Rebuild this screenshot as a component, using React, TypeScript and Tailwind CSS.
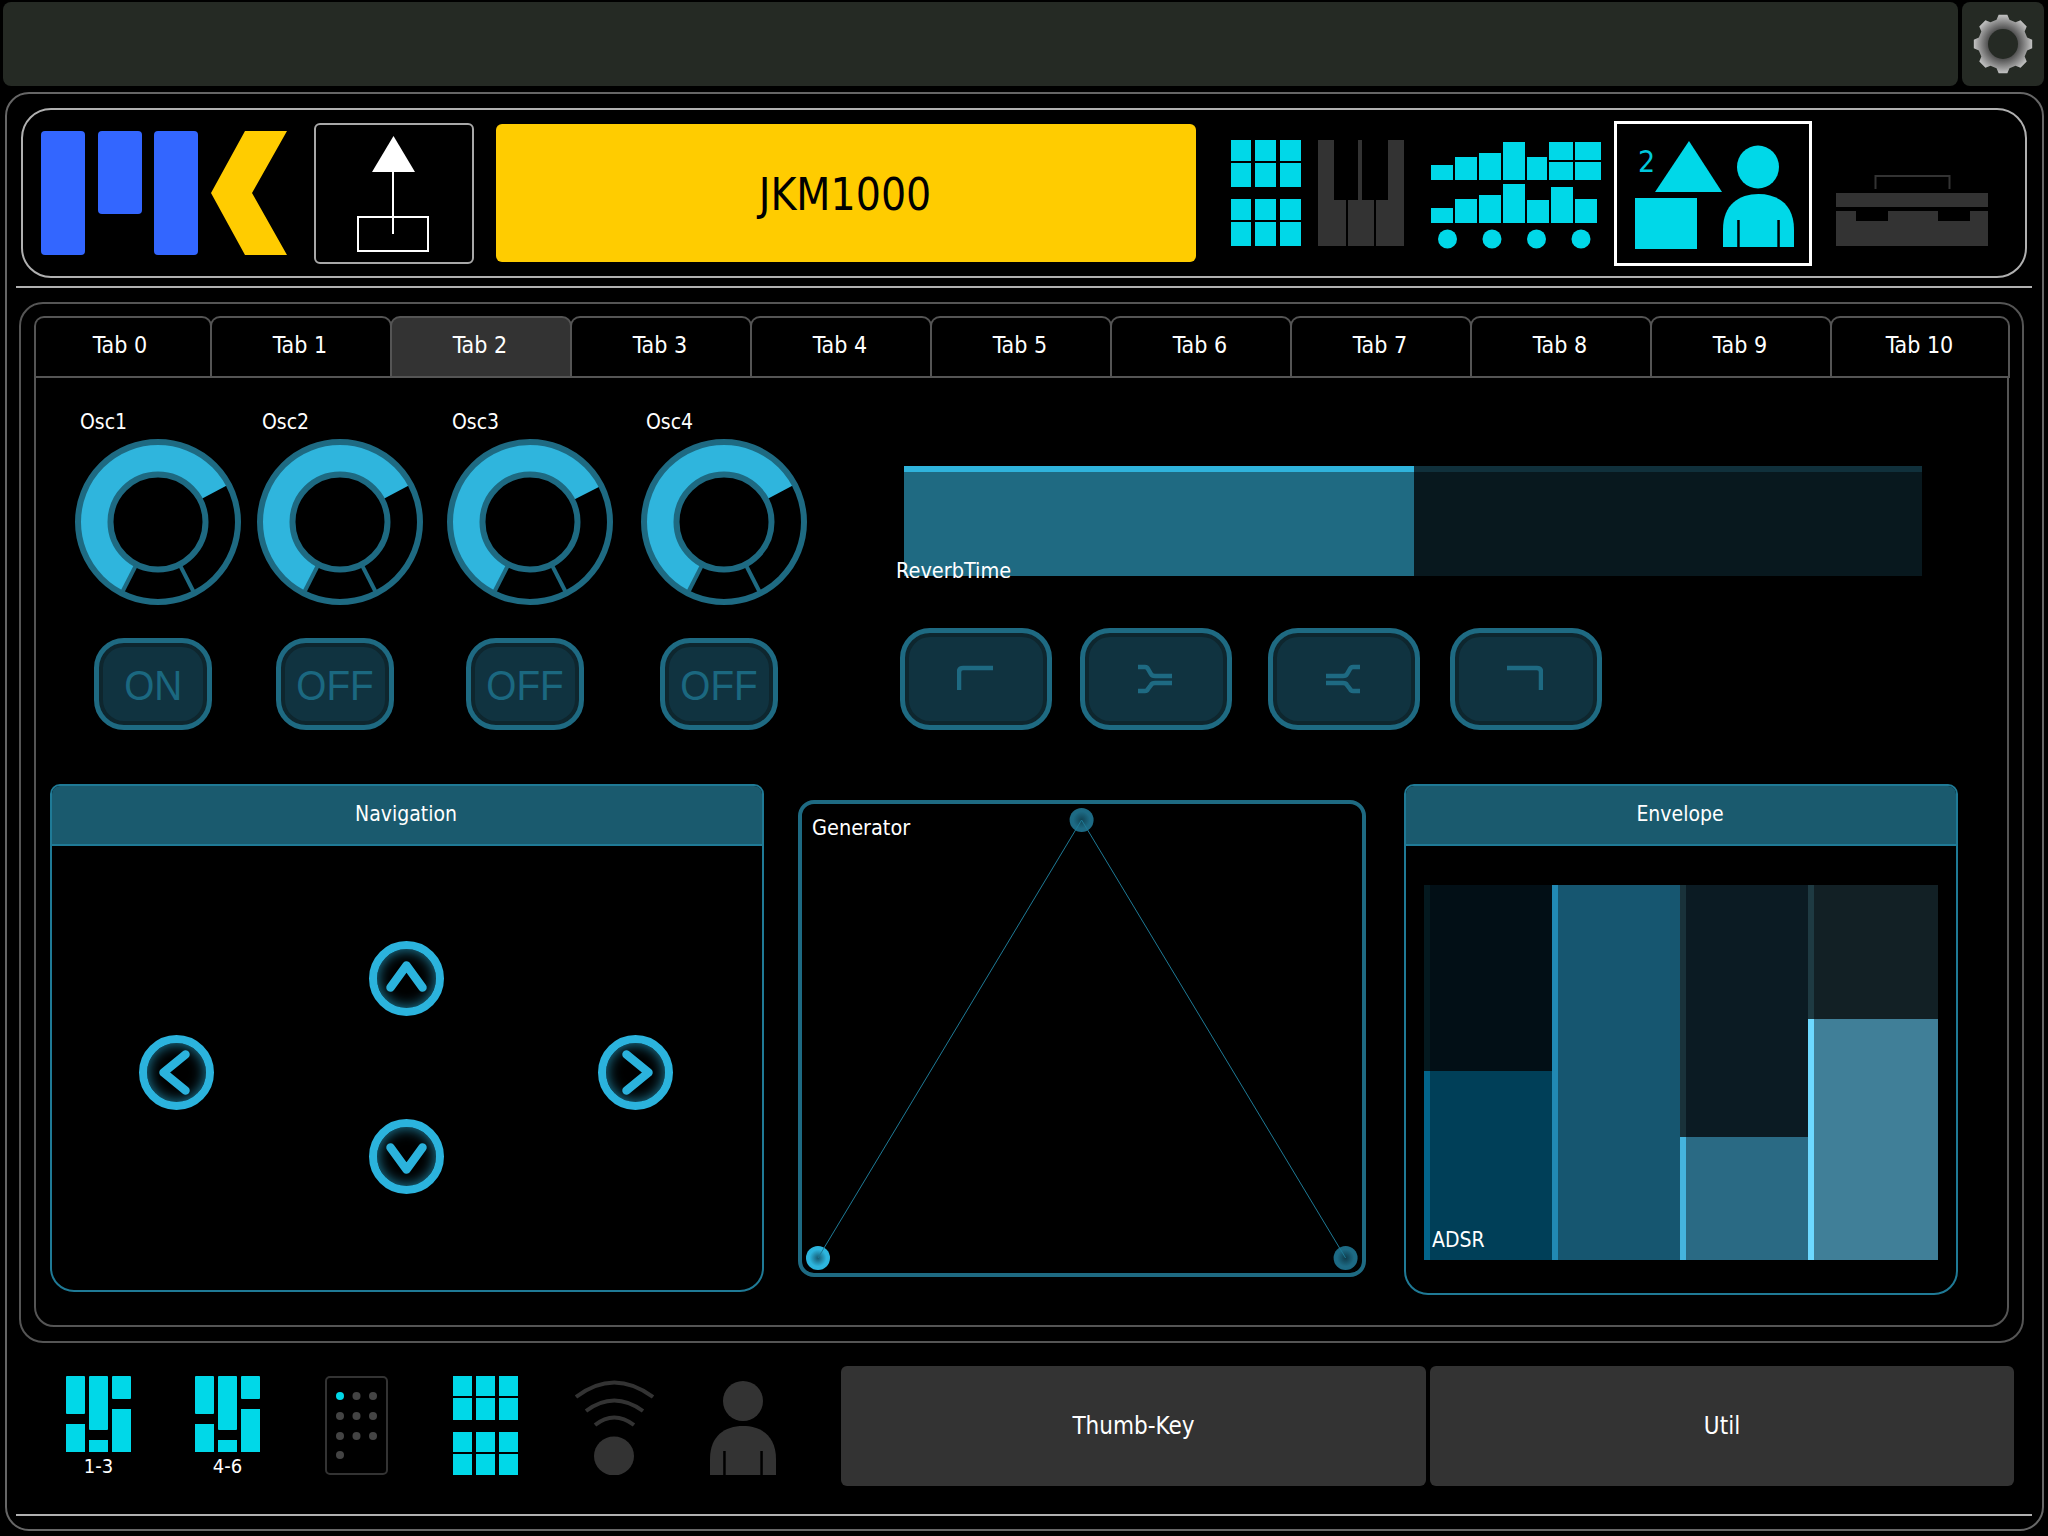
import React from "react";

const CY = "#00d8e8";
const DK = "#333333";

function polar(r: number, deg: number, c: number) {
  const a = ((deg - 90) * Math.PI) / 180;
  return [c + r * Math.cos(a), c + r * Math.sin(a)];
}
function sector(ro: number, ri: number, a0: number, a1: number, c: number) {
  const sweep = ((a1 - a0) % 360 + 360) % 360;
  const large = sweep > 180 ? 1 : 0;
  const [x0, y0] = polar(ro, a0, c);
  const [x1, y1] = polar(ro, a1, c);
  const [x2, y2] = polar(ri, a1, c);
  const [x3, y3] = polar(ri, a0, c);
  return `M${x0} ${y0}A${ro} ${ro} 0 ${large} 1 ${x1} ${y1}L${x2} ${y2}A${ri} ${ri} 0 ${large} 0 ${x3} ${y3}Z`;
}

function Knob({ end = 62 }: { end?: number }) {
  const c = 83;
  const spoke = (deg: number) => {
    const [x0, y0] = polar(47.5, deg, c);
    const [x1, y1] = polar(80, deg, c);
    return `M${x0} ${y0}L${x1} ${y1}`;
  };
  return (
    <svg width="166" height="166" viewBox="0 0 166 166" className="block">
      <path d={sector(80, 47.5, 207, end, c)} fill="#2fb5dd" />
      <circle cx={c} cy={c} r="80" fill="none" stroke="#1e6a82" strokeWidth="6" />
      <circle cx={c} cy={c} r="47.5" fill="none" stroke="#1e6a82" strokeWidth="6" />
      <path d={spoke(207)} stroke="#1e6a82" strokeWidth="4" />
      <path d={spoke(153)} stroke="#1e6a82" strokeWidth="4" />
    </svg>
  );
}

function Osc({ label, btn, ml, end }: { label: string; btn: string; ml: string; end?: number }) {
  return (
    <div className={`flex flex-col w-[165px] shrink-0 pt-[30px] ${ml}`}>
      <div className="h-[28px] pl-[5px] text-[21px] leading-[28px] text-white">{label}</div>
      <div className="mt-[3px] h-[165px]">
        <Knob end={end} />
      </div>
      <div className="mt-[34px] ml-[19px] w-[118px] h-[92px] rounded-[30px] border-[5px] border-[#1e6a82] bg-[#103340] shadow-[inset_0_0_0_4px_#0e262e] flex items-center justify-center pt-[3px]">
        <span className="block scale-x-[0.9] text-[43px] leading-none text-[#1b6880] font-['Liberation_Sans',sans-serif]">
          {btn}
        </span>
      </div>
    </div>
  );
}

function CurveBtn({ ml, children }: { ml: string; children: React.ReactNode }) {
  return (
    <div
      className={`${ml} w-[152px] h-[102px] rounded-[30px] border-[5px] border-[#1e6a82] bg-[#103340] shadow-[inset_0_0_0_4px_#0e262e] flex items-center justify-center pr-[2px]`}
    >
      <svg width="36" height="32" viewBox="0 0 36 32" fill="none" stroke="#1e6a82" strokeWidth="4.500" className="block">
        {children}
      </svg>
    </div>
  );
}

function Chev({ dir }: { dir: "u" | "d" | "l" | "r" }) {
  const d = {
    u: "M-16 9L0 -13L16 9",
    d: "M-16 -9L0 13L16 -9",
    l: "M9 -18L-13 0L9 18",
    r: "M-9 -18L13 0L-9 18",
  }[dir];
  return (
    <div className="w-[75px] h-[75px] rounded-full border-[8px] border-[#2bb3dd] bg-black shadow-[inset_0_0_14px_rgba(43,179,221,0.75)] flex items-center justify-center">
      <svg width="59" height="59" viewBox="-29.500 -29.500 59 59" className="block">
        <path d={d} fill="none" stroke="#2bb3dd" strokeWidth="8.500" strokeLinecap="round" strokeLinejoin="round" />
      </svg>
    </div>
  );
}

function PanelHead({ title }: { title: string }) {
  return (
    <div className="h-[60px] shrink-0 bg-[#1a5a6e] border-b-2 border-[#1f7a96] rounded-t-[8px] flex items-center justify-center pb-[1px] pr-[2px] text-[21px] text-white">
      {title}
    </div>
  );
}

function EnvCol({
  w,
  topH,
  topBg,
  topStrip,
  botBg,
  botStrip,
  label,
}: {
  w: string;
  topH: string;
  topBg: string;
  topStrip: string;
  botBg: string;
  botStrip: string;
  label?: string;
}) {
  return (
    <div className={`${w} flex flex-col`}>
      <div className={`${topH} ${topBg} shrink-0`}>
        <div className={`w-[6px] h-full ${topStrip}`} />
      </div>
      <div className={`flex-1 ${botBg} flex items-end`}>
        <div className={`w-[6px] h-full shrink-0 ${botStrip}`} />
        {label ? <span className="pl-[2px] pb-[7px] text-[21px] leading-[26px] text-white">{label}</span> : null}
      </div>
    </div>
  );
}

function Gear() {
  const pts: string[] = [];
  const c = 30;
  for (let i = 0; i < 8; i++) {
    const a = i * 45;
    for (const [r, o] of [
      [25, -15],
      [29.5, -8.5],
      [29.5, 8.5],
      [25, 15],
    ] as [number, number][]) {
      const [x, y] = polar(r, a + o, c);
      pts.push(`${x},${y}`);
    }
  }
  return (
    <svg width="60" height="60" viewBox="0 0 60 60" className="block">
      <defs>
        <radialGradient id="gearGrad" cx="50%" cy="50%" r="50%">
          <stop offset="50%" stopColor="#4e4e4e" />
          <stop offset="100%" stopColor="#c2c2c2" />
        </radialGradient>
      </defs>
      <polygon points={pts.join(" ")} fill="url(#gearGrad)" />
      <circle cx={c} cy={c} r="15" fill="#252a24" />
    </svg>
  );
}

function Logo() {
  return (
    <svg width="246" height="124" viewBox="41 131 246 124" className="block shrink-0">
      <rect x="41" y="131" width="44" height="124" rx="4" fill="#3366ff" />
      <rect x="98" y="131" width="44" height="83" rx="4" fill="#3366ff" />
      <rect x="154" y="131" width="44" height="124" rx="4" fill="#3366ff" />
      <polygon points="245,131 287,131 252,193 287,255 245,255 211,193" fill="#ffcc00" />
    </svg>
  );
}

function GridIcon() {
  const xs = [
    [1231, 20],
    [1255, 21],
    [1280, 21],
  ];
  const ys = [
    [140, 21],
    [163, 24],
    [199, 21],
    [222, 24],
  ];
  return (
    <svg width="70" height="106" viewBox="1231 140 70 106" className="block shrink-0" fill={CY}>
      {ys.map(([y, h]) => xs.map(([x, w]) => <rect key={`${x}-${y}`} x={x} y={y} width={w} height={h} />))}
    </svg>
  );
}

function Piano() {
  return (
    <svg width="86" height="106" viewBox="1318 140 86 106" className="block shrink-0" fill={DK}>
      <path d="M1318 140H1334V200H1346V246H1318Z" />
      <path d="M1358 140H1362V200H1374V246H1348V200H1358Z" />
      <path d="M1388 140H1404V246H1376V200H1388Z" />
    </svg>
  );
}

function Bars() {
  const top = [
    [1431, 22, 165],
    [1455, 22, 157],
    [1479, 22, 153],
    [1503, 22, 142],
    [1527, 20, 157],
  ];
  const bot = [
    [1431, 22, 208],
    [1455, 22, 199],
    [1479, 22, 195],
    [1503, 22, 184],
    [1527, 22, 200],
    [1551, 22, 187],
    [1575, 22, 199],
  ];
  return (
    <svg width="170" height="110" viewBox="1431 140 170 110" className="block shrink-0 mt-[4px]" fill={CY}>
      {top.map(([x, w, y]) => (
        <rect key={x} x={x} y={y} width={w} height={180 - y} />
      ))}
      <rect x="1549" y="142" width="24" height="18" />
      <rect x="1549" y="162" width="24" height="18" />
      <rect x="1575" y="142" width="26" height="18" />
      <rect x="1575" y="162" width="26" height="18" />
      {bot.map(([x, w, y]) => (
        <rect key={x} x={x} y={y} width={w} height={223 - y} />
      ))}
      {[1447.5, 1492, 1536.5, 1581].map((x) => (
        <circle key={x} cx={x} cy="239" r="9.5" />
      ))}
    </svg>
  );
}

function PersonBody({ x, w, top, slot, bottom, color }: { x: number; w: number; top: number; slot: number; bottom: number; color: string }) {
  const mid = x + w / 2;
  const r = w / 2;
  return (
    <>
      <path
        d={`M${x} ${bottom}V${top + r}C${x} ${top + r * 0.3} ${mid - r * 0.55} ${top} ${mid} ${top}C${mid + r * 0.55} ${top} ${x + w} ${top + r * 0.3} ${x + w} ${top + r}V${bottom}Z`}
        fill={color}
      />
      <rect x={x + w * 0.2} y={slot} width="2.5" height={bottom - slot} fill="#000" />
      <rect x={x + w * 0.8 - 2.5} y={slot} width="2.5" height={bottom - slot} fill="#000" />
    </>
  );
}

function Selected() {
  return (
    <div className="relative w-[198px] h-[145px] shrink-0 border-[3px] border-white flex items-center justify-center">
      <svg width="192" height="139" viewBox="1617 123 192 139" className="block" fill={CY}>
        <polygon points="1689,140 1722,191 1655,191" />
        <rect x="1635" y="197" width="62" height="51" />
        <ellipse cx="1758" cy="166" rx="21" ry="21.5" />
        <PersonBody x={1723} w={71} top={193} slot={219} bottom={246} color={CY} />
      </svg>
      <span className="absolute left-[21px] top-[20px] text-[30px] leading-[36px] text-[#00c8dc]">2</span>
    </div>
  );
}

function Briefcase() {
  return (
    <svg width="152" height="106" viewBox="1836 140 152 106" className="block shrink-0" fill={DK}>
      <path d="M1875.500 189V176H1949.500V189" fill="none" stroke={DK} strokeWidth="2" />
      <rect x="1836" y="193" width="152" height="14" />
      <path d="M1836 211H1856V221H1888V211H1938V221H1970V211H1988V246H1836Z" />
    </svg>
  );
}

function Upload() {
  return (
    <div className="w-[160px] h-[141px] shrink-0 rounded-[6px] border-2 border-[#a8a8a8] flex items-center pl-[0px]">
      <svg width="154" height="137" viewBox="317 124 154 137" className="block">
        <polygon points="394.500,135 416,171 373,171" fill="#fff" />
        <line x1="394" y1="171" x2="394" y2="233" stroke="#fff" strokeWidth="2" />
        <rect x="359" y="216" width="70" height="34" fill="none" stroke="#fff" strokeWidth="2" />
      </svg>
    </div>
  );
}

function Thumb({ label, ml }: { label: string; ml: string }) {
  return (
    <div className={`${ml} w-[65px] shrink-0 flex flex-col items-center mt-[10px]`}>
      <svg width="65" height="76" viewBox="66 1376 65 76" className="block" fill={CY}>
        <rect x="66" y="1376" width="19" height="38" rx="1" />
        <rect x="66" y="1424" width="19" height="28" />
        <rect x="89" y="1376" width="19" height="54" rx="1" />
        <rect x="89" y="1440" width="19" height="12" />
        <rect x="112" y="1376" width="19" height="23" rx="1" />
        <rect x="112" y="1409" width="19" height="43" />
      </svg>
      <span className="text-[20px] leading-[22px] mt-[3px] text-white">{label}</span>
    </div>
  );
}

function Remote() {
  const rows = [1396, 1416, 1436];
  const cols = [340, 356.5, 373];
  return (
    <svg width="63" height="99" viewBox="325 1376 63 99" className="block shrink-0 ml-[65px] mt-[10px]">
      <rect x="326" y="1377" width="61" height="97" rx="4" fill="none" stroke={DK} strokeWidth="2" />
      {rows.map((y, r) =>
        cols.map((x, c) => <circle key={`${x}-${y}`} cx={x} cy={y} r="4" fill={r === 0 && c === 0 ? CY : "#444"} />)
      )}
      <circle cx="340" cy="1455" r="4" fill="#444" />
    </svg>
  );
}

function Grid2() {
  const xs = [453, 476, 499];
  const ys = [
    [1376, 20],
    [1398, 22],
    [1432, 20],
    [1454, 21],
  ];
  return (
    <svg width="65" height="99" viewBox="453 1376 65 99" className="block shrink-0 ml-[65px] mt-[10px]" fill={CY}>
      {ys.map(([y, h]) => xs.map((x) => <rect key={`${x}-${y}`} x={x} y={y} width="19" height={h} />))}
    </svg>
  );
}

function Wifi() {
  return (
    <svg width="79" height="99" viewBox="575 1376 79 99" className="block shrink-0 ml-[57px] mt-[10px]">
      <path d="M576 1397Q614 1368 653 1397" fill="none" stroke={DK} strokeWidth="4" />
      <path d="M586 1411Q614 1390 643 1411" fill="none" stroke={DK} strokeWidth="4" />
      <path d="M595 1425Q614 1410 634 1425" fill="none" stroke={DK} strokeWidth="4" />
      <ellipse cx="614" cy="1456" rx="20" ry="19.500" fill={DK} />
    </svg>
  );
}

function Person() {
  return (
    <svg width="66" height="99" viewBox="710 1376 66 99" className="block shrink-0 ml-[56px] mt-[10px]">
      <ellipse cx="743" cy="1401" rx="20" ry="20" fill={DK} />
      <PersonBody x={710} w={66} top={1426} slot={1451} bottom={1475} color={DK} />
    </svg>
  );
}

function Generator() {
  const nodes: [number, number, string, string][] = [
    [1081.6, 820, "#1d6a84", "#114455"],
    [818, 1258, "#2db5de", "#165a72"],
    [1345.6, 1258, "#1d6a84", "#0f3c4c"],
  ];
  return (
    <div className="relative w-[568px] h-[477px] mt-[16px] ml-[34px] shrink-0 rounded-[16px] border-4 border-[#1e6a82] bg-black">
      <svg width="560" height="469" viewBox="802 804 560 469" className="block">
        <defs>
          {nodes.map(([x, , a, b]) => (
            <radialGradient key={x} id={`n${Math.round(x)}`}>
              <stop offset="0%" stopColor={b} />
              <stop offset="70%" stopColor={a} />
              <stop offset="100%" stopColor={a} />
            </radialGradient>
          ))}
        </defs>
        {nodes.map(([x, y]) => (
          <circle key={x} cx={x} cy={y} r="12" fill={`url(#n${Math.round(x)})`} />
        ))}
        <path d="M818 1258L1081.600 820L1345.600 1258" fill="none" stroke="#1e7a96" strokeWidth="1" />
      </svg>
      <span className="absolute left-[10px] top-[10px] text-[21.500px] leading-[28px] text-white">Generator</span>
    </div>
  );
}

const TABS = ["Tab 0", "Tab 1", "Tab 2", "Tab 3", "Tab 4", "Tab 5", "Tab 6", "Tab 7", "Tab 8", "Tab 9", "Tab 10"];

export default function App() {
  return (
    <div className="w-[2048px] h-[1536px] bg-black overflow-hidden flex flex-col pt-[2px] font-['DejaVu_Sans_Condensed','DejaVu_Sans',sans-serif]">
      {/* status bar */}
      <div className="flex h-[84px] shrink-0 pl-[3px] pr-[4px] gap-[4px]">
        <div className="flex-1 rounded-[8px] bg-[#252a24]" />
        <div className="w-[82px] rounded-[8px] bg-[#252a24] flex items-center justify-center">
          <Gear />
        </div>
      </div>

      {/* main frame */}
      <div className="mt-[6px] ml-[5px] w-[2039px] h-[1439px] shrink-0 rounded-[24px] border-2 border-[#666666] flex flex-col">
        {/* header */}
        <div className="mt-[14px] ml-[14px] w-[2006px] h-[170px] shrink-0 rounded-[30px] border-2 border-[#b0b0b0] flex items-center pl-[18px]">
          <Logo />
          <div className="ml-[27px]">
            <Upload />
          </div>
          <div className="ml-[22px] w-[700px] h-[138px] shrink-0 rounded-[6px] bg-[#ffcc00] flex items-center justify-center pr-[2px] pt-[4px] text-[44px] text-black">
            JKM1000
          </div>
          <div className="ml-[35px]">
            <GridIcon />
          </div>
          <div className="ml-[17px]">
            <Piano />
          </div>
          <div className="ml-[27px]">
            <Bars />
          </div>
          <div className="ml-[13px]">
            <Selected />
          </div>
          <div className="ml-[24px]">
            <Briefcase />
          </div>
        </div>
        <div className="mt-[8px] ml-[9px] w-[2016px] h-[2px] shrink-0 bg-[#b0b0b0]" />

        {/* tab group frame */}
        <div className="mt-[14px] ml-[12px] w-[2005px] h-[1041px] shrink-0 rounded-[24px] border-2 border-[#555555] pt-[12px] pl-[13px]">
          <div className="w-[1975px] h-[1011px] flex flex-col">
            <div className="flex h-[60px] shrink-0">
              {TABS.map((t, i) => (
                <div
                  key={t}
                  className={`h-[62px] -mr-[2px] rounded-t-[10px] border-2 border-b-0 border-[#555555] flex items-center justify-center pb-[6px] text-[23px] text-white shrink-0 ${
                    i === 0 ? "w-[178px] pr-[6px]" : i === 10 ? "w-[180px] pr-[1px]" : "w-[182px] pr-[2px]"
                  } ${i === 2 ? "bg-[#333333]" : "bg-black"}`}
                >
                  {t}
                </div>
              ))}
            </div>
            <div className="flex-1 border-2 border-[#555555] rounded-b-[20px] flex flex-col">
              {/* upper row */}
              <div className="flex h-[352px] shrink-0">
                <Osc label="Osc1" btn="ON" ml="ml-[39px]" />
                <Osc label="Osc2" btn="OFF" ml="ml-[17px]" />
                <Osc label="Osc3" btn="OFF" ml="ml-[25px]" end={63} />
                <Osc label="Osc4" btn="OFF" ml="ml-[29px]" />
                <div className="ml-[98px] pt-[88px] flex flex-col">
                  <div className="relative w-[1018px] h-[110px] bg-[#08181e] flex flex-col">
                    <div className="flex h-[6px] shrink-0">
                      <div className="w-[510px] bg-[#2fb3dc]" />
                      <div className="flex-1 bg-[#10303b]" />
                    </div>
                    <div className="flex-1 flex">
                      <div className="w-[510px] bg-[#1f6a82]" />
                    </div>
                    <span className="absolute -left-[8px] top-[91px] text-[21.500px] leading-[28px] text-white">ReverbTime</span>
                  </div>
                  <div className="flex mt-[52px] -ml-[4px]">
                    <CurveBtn ml="">
                      <path d="M2 27V9Q2 5 6 5H36" />
                    </CurveBtn>
                    <CurveBtn ml="ml-[28px]">
                      <path d="M1 4H8Q10 4 11 6L14 11Q15 13 18 13H35M1 28H8Q10 28 11 26L14 22Q15 20 18 20H35" />
                    </CurveBtn>
                    <CurveBtn ml="ml-[36px]">
                      <path d="M35 4H28Q26 4 25 6L22 11Q21 13 18 13H1M35 28H28Q26 28 25 26L22 22Q21 20 18 20H1" />
                    </CurveBtn>
                    <CurveBtn ml="ml-[30px]">
                      <path d="M34 27V9Q34 5 30 5H0" />
                    </CurveBtn>
                  </div>
                </div>
              </div>

              {/* panels */}
              <div className="mt-[54px] ml-[14px] flex items-start">
                <div className="w-[714px] h-[508px] shrink-0 rounded-t-[10px] rounded-b-[24px] border-2 border-[#1f7a96] flex flex-col">
                  <PanelHead title="Navigation" />
                  <div className="flex-1 flex flex-col items-center pt-[95px] pr-[2px]">
                    <Chev dir="u" />
                    <div className="mt-[19px] w-[534px] flex justify-between">
                      <Chev dir="l" />
                      <Chev dir="r" />
                    </div>
                    <div className="mt-[9px]">
                      <Chev dir="d" />
                    </div>
                  </div>
                </div>
                <Generator />
                <div className="ml-[38px] w-[554px] h-[511px] shrink-0 rounded-t-[10px] rounded-b-[24px] border-2 border-[#1f7a96] flex flex-col">
                  <PanelHead title="Envelope" />
                  <div className="ml-[18px] mt-[39px] w-[514px] h-[375px] flex">
                    <EnvCol w="w-[128px]" topH="h-[186px]" topBg="bg-[#020f16]" topStrip="bg-[#04191f]" botBg="bg-[#003f58]" botStrip="bg-[#02648a]" label="ADSR" />
                    <EnvCol w="w-[128px]" topH="h-0" topBg="bg-[#165670]" topStrip="bg-[#2189b4]" botBg="bg-[#165670]" botStrip="bg-[#2189b4]" />
                    <EnvCol w="w-[128px]" topH="h-[252px]" topBg="bg-[#0b1b23]" topStrip="bg-[#19323a]" botBg="bg-[#2a6a84]" botStrip="bg-[#45b4de]" />
                    <EnvCol w="w-[130px]" topH="h-[134px]" topBg="bg-[#122025]" topStrip="bg-[#1e3a42]" botBg="bg-[#407f98]" botStrip="bg-[#6dd9ff]" />
                  </div>
                </div>
              </div>
            </div>
          </div>
        </div>

        {/* bottom row */}
        <div className="mt-[23px] ml-[59px] flex items-start h-[120px] shrink-0">
          <Thumb label="1-3" ml="" />
          <Thumb label="4-6" ml="ml-[64px]" />
          <Remote />
          <Grid2 />
          <Wifi />
          <Person />
          <div className="ml-[65px] w-[585px] h-[120px] shrink-0 rounded-[6px] bg-[#333333] flex items-center justify-center text-[24px] text-white">
            Thumb-Key
          </div>
          <div className="ml-[4px] w-[584px] h-[120px] shrink-0 rounded-[6px] bg-[#333333] flex items-center justify-center text-[24px] text-white">
            Util
          </div>
        </div>
        <div className="mt-[28px] ml-[9px] w-[2016px] h-[2px] shrink-0 bg-[#b0b0b0]" />
      </div>
    </div>
  );
}
